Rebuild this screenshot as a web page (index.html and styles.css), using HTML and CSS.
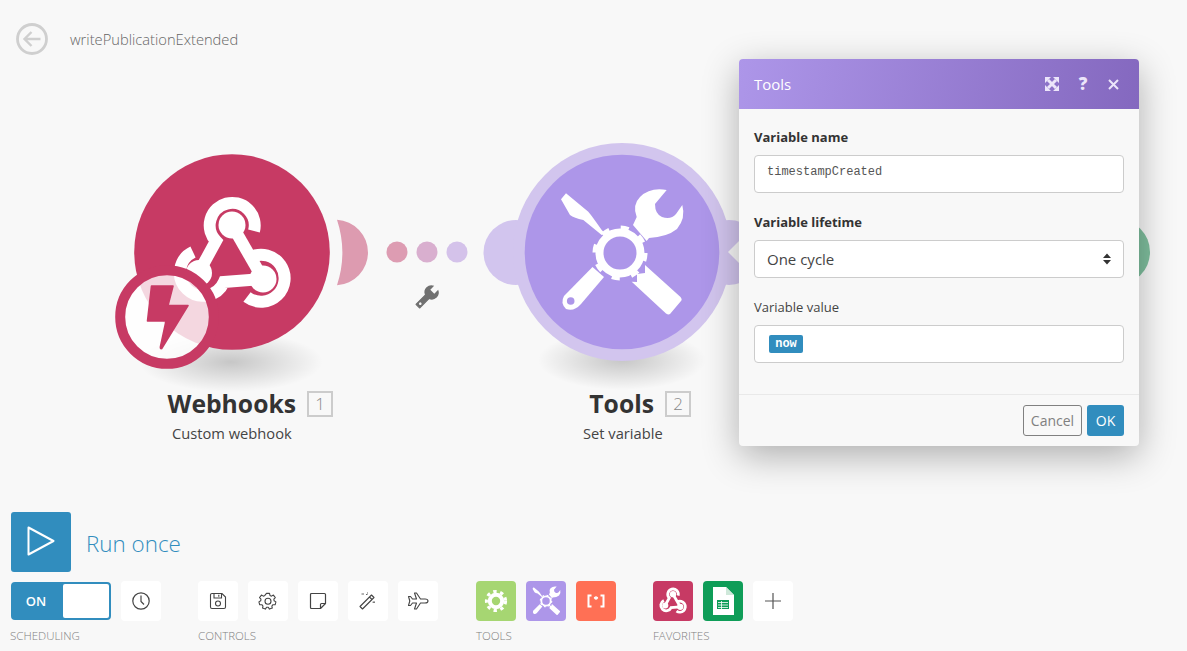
FILE: index.html
```html
<!DOCTYPE html>
<html lang="en">
<head>
<meta charset="utf-8">
<title>writePublicationExtended</title>
<link rel="stylesheet" href="styles.css">
</head>
<body>
<svg class="defs" width="0" height="0" aria-hidden="true">
  <defs>
    <radialGradient id="shadow">
      <stop offset="0" stop-color="#000" stop-opacity=".2"/>
      <stop offset=".5" stop-color="#000" stop-opacity=".1"/>
      <stop offset="1" stop-color="#000" stop-opacity="0"/>
    </radialGradient>
    <symbol id="webhook" viewBox="168 190 128 128">
      <g fill="none" stroke="#fff" stroke-width="12">
        <path d="M254 231 A22.500 22.500 0 1 0 216 241 L199 272"/>
        <path d="M232 225 L263 279"/>
        <path d="M263 279 L224 282 A23 23 0 1 1 193 252"/>
        <path d="M247 297 A23.500 23.500 0 1 0 251 257"/>
      </g>
      <circle cx="232" cy="225" r="13.500" fill="#fff"/>
      <circle cx="263" cy="279" r="13.500" fill="#fff"/>
      <circle cx="199" cy="273" r="13" fill="#fff"/>
    </symbol>
    <symbol id="tools" viewBox="553 183 134 140">
      <g fill="#fff">
        <path d="M566 193.300 L588.300 211.700 Q592 216 601.700 230 L605 233.300 L601.700 235 L583.300 220 Q574 218 570 215 L561 199.300 Z"/>
        <path d="M592.500 267 L604 277 L581 304 Q574 312 566 309 Q560 303 564 296 Z"/>
        <path d="M645 265 L680.500 297 Q682.500 299.500 681 301 L670 314 Q668.500 315 666 313.500 L631.700 281.700 L637 282 L637 274 L645 273 Z"/>
        <path d="M666.700 190 L655 204 Q655 214 662 217 Q671 220 676 214 L682.300 205 Q686 218 677 229 Q667 237 649 238 L646.700 241 L633 225 L636.700 217 Q632 205 640 197 Q650 187 666.700 190 Z"/>
      </g>
      <circle cx="620" cy="253" r="20.500" fill="none" stroke="#fff" stroke-width="8"/>
      <circle cx="620" cy="253" r="25" fill="none" stroke="#fff" stroke-width="5" stroke-dasharray="8 11.630"/>
    </symbol>
    <symbol id="cog" viewBox="0 0 24 24">
      <circle cx="12" cy="12" r="6.200" fill="none" stroke="#fff" stroke-width="4"/>
      <circle cx="12" cy="12" r="9.600" fill="none" stroke="#fff" stroke-width="3" stroke-dasharray="3.400 3.630"/>
    </symbol>
  </defs>
</svg>

<header class="topbar">
  <a class="back" aria-label="Back">
    <svg viewBox="0 0 32 32" width="32" height="32"><circle cx="16" cy="16" r="14.500" fill="none" stroke="#cfcfcf" stroke-width="2.800"/><path d="M24.500 16H8.500M15.500 9 8.500 16l7 7" fill="none" stroke="#cfcfcf" stroke-width="2.400"/></svg>
  </a>
  <h1 class="scenario-name">writePublicationExtended</h1>
</header>

<svg class="diagram" width="1187" height="651" viewBox="0 0 1187 651" aria-hidden="true">
  <ellipse cx="231" cy="362" rx="92" ry="30" fill="url(#shadow)"/>
  <ellipse cx="622" cy="360" rx="84" ry="30" fill="url(#shadow)"/>

  <circle cx="1117" cy="252" r="33" fill="#7fbf9e"/>

  <path d="M337 219.700 A32.800 32.800 0 0 1 337 285.200 A105 105 0 0 0 337 219.700 Z" fill="#dd9bb0"/>
  <circle cx="397" cy="252" r="10.500" fill="#dd9cb2"/>
  <circle cx="427" cy="252" r="10.500" fill="#d9afcf"/>
  <circle cx="457" cy="252" r="10.500" fill="#d4c2ea"/>
  <g transform="translate(427 297) rotate(45)">
    <path d="M-2.600 -4 V13 H2.600 V-4 Z" fill="#707070" stroke="#707070" stroke-linejoin="round"/>
    <path d="M-2.800 -13 V-7.500 H2.800 V-13 A7 7 0 0 1 2.800 0 H-2.800 A7 7 0 0 1 -2.800 -13 Z" fill="#707070"/>
    <circle cx="0" cy="9.500" r="1.300" fill="#f8f8f8"/>
  </g>

  <circle cx="232" cy="252" r="97.800" fill="#c73a64"/>
  <use href="#webhook" x="168" y="190" width="128" height="128"/>
  <circle cx="167" cy="317" r="46.800" fill="#fff" fill-opacity=".8" stroke="#c73a64" stroke-width="10"/>
  <path d="M151.500 286 H173 L168 305.500 H188 L161.700 348.500 Q160 349 160.500 346.500 L166 321 H147.500 Z" fill="#c73a64" stroke="#c73a64" stroke-width="1.600" stroke-linejoin="round"/>

  <circle cx="516" cy="252.500" r="32.500" fill="#d2c5ee"/>
  <circle cx="729" cy="252.500" r="32.500" fill="#d2c5ee"/>
  <circle cx="622" cy="252" r="109" fill="#d2c5ee"/>
  <path d="M728 252 L745 235 V269 Z" fill="#f8f8f8"/>
  <circle cx="622" cy="252" r="97.300" fill="#ad96e9"/>
  <use href="#tools" x="553" y="183" width="134" height="140"/>
  <circle cx="570.700" cy="301" r="3.800" fill="#ad96e9"/>
</svg>

<div class="node-label node-label-webhooks">
  <div class="node-title"><strong>Webhooks</strong><span class="node-index">1</span></div>
  <div class="node-sub">Custom webhook</div>
</div>
<div class="node-label node-label-tools">
  <div class="node-title"><strong>Tools</strong><span class="node-index">2</span></div>
  <div class="node-sub">Set variable</div>
</div>

<section class="modal">
  <header class="modal-head">
    <span class="modal-title">Tools</span>
    <div class="modal-actions">
      <svg class="action-expand" width="14" height="14" viewBox="0 0 14 14" aria-hidden="true"><path d="M3 3 11 11M11 3 3 11" stroke="#ece5fa" stroke-width="3"/><path d="M0 0H6L0 6ZM14 0V6L8 0ZM0 14V8L6 14ZM14 14H8L14 8Z" fill="#ece5fa"/></svg>
      <span class="modal-help">?</span>
      <svg width="11" height="11" viewBox="0 0 11 11" aria-hidden="true"><path d="M1 1 10 10M10 1 1 10" stroke="#ece5fa" stroke-width="2"/></svg>
    </div>
  </header>
  <div class="modal-body">
    <label class="field-label field-first">Variable name</label>
    <input class="text-field mono" type="text" value="timestampCreated">
    <label class="field-label">Variable lifetime</label>
    <div class="select-wrap">
      <select class="text-field select"><option>One cycle</option></select>
      <svg class="select-arrows" width="8" height="12" viewBox="0 0 8 12" aria-hidden="true"><path d="M4 .5 8 5H0ZM4 11.500 0 7H8Z" fill="#333"/></svg>
    </div>
    <label class="field-label field-plain">Variable value</label>
    <div class="text-field tag-field"><span class="tag">now</span></div>
  </div>
  <footer class="modal-foot">
    <button class="btn btn-cancel">Cancel</button>
    <button class="btn btn-ok">OK</button>
  </footer>
</section>

<footer class="toolbar">
  <div class="run-row">
    <button class="run-btn" aria-label="Run once">
      <svg width="30" height="32" viewBox="0 0 30 32"><path d="M2.500 2.500 27.500 16 2.500 29.500Z" fill="none" stroke="#fff" stroke-width="2" stroke-linejoin="round"/></svg>
    </button>
    <span class="run-label">Run once</span>
  </div>
  <div class="tool-row">
    <div class="group group-sched">
      <div class="group-items">
        <div class="toggle"><span class="toggle-on">ON</span><span class="toggle-knob"></span></div>
        <button class="tool">
          <svg width="20" height="20" viewBox="0 0 20 20"><circle cx="10" cy="10" r="8.200" fill="none" stroke="#444" stroke-width="1.200"/><path d="M10 4.500V10.500L13 13.500" fill="none" stroke="#444" stroke-width="1.200"/></svg>
        </button>
      </div>
      <div class="group-label">SCHEDULING</div>
    </div>
    <div class="group">
      <div class="group-items">
        <button class="tool"><svg width="18" height="18" viewBox="0 0 18 18"><path d="M1.500 3a1.500 1.500 0 0 1 1.500-1.500H13L16.500 5V15a1.500 1.500 0 0 1-1.500 1.500H3A1.500 1.500 0 0 1 1.500 15ZM5 1.500V6H12.500V1.500M9.800 2.800V4.800" fill="none" stroke="#444" stroke-width="1.100"/><circle cx="9" cy="11.500" r="2.500" fill="none" stroke="#444" stroke-width="1.100"/></svg></button>
        <button class="tool"><svg width="20" height="20" viewBox="0 0 20 20"><path d="M8.300 1.500h3.400l.5 2.300 1.700.8 2.100-1.200 2.100 2.800-1.600 1.700.3 1.900 2 1.200-.9 3.200-2.400-.1-1.200 1.500.5 2.300-3.200 1.100-1.300-2-1.900 0-1.300 2-3.200-1.100.5-2.300-1.200-1.500-2.400.1-.9-3.200 2-1.200.3-1.900-1.600-1.700 2.100-2.800 2.100 1.200 1.700-.8Z" transform="translate(1 1) scale(.9)" fill="none" stroke="#444" stroke-width="1.200" stroke-linejoin="round"/><circle cx="10" cy="10.200" r="3" fill="none" stroke="#444" stroke-width="1.100"/></svg></button>
        <button class="tool"><svg width="18" height="18" viewBox="0 0 18 18"><path d="M11.500 16.500H2.500a1 1 0 0 1-1-1V2.500a1 1 0 0 1 1-1h13a1 1 0 0 1 1 1V11.500ZM11.500 16.500V12.500a1 1 0 0 1 1-1h4" fill="none" stroke="#444" stroke-width="1.200" stroke-linejoin="round"/></svg></button>
        <button class="tool"><svg width="20" height="20" viewBox="0 0 20 20"><path d="M2 15.500 13.500 4l2.500 2.500L4.500 18ZM11.500 6l2.500 2.500" fill="none" stroke="#444" stroke-width="1.100" stroke-linejoin="round"/><path d="M3.500 3H6M8 3.500H9.500M9.500 1.500V2.500M16 10.500V12M14.500 11.200H17" fill="none" stroke="#666" stroke-width="1"/></svg></button>
        <button class="tool"><svg width="22" height="20" viewBox="0 0 22 20"><path d="M21 10c0-1.200-1.400-2-3-2h-4.500L9.500 2H7.500l2 6H5.500L3.500 5.500H1.500L2.800 10 1.500 14.500h2L5.500 12h4l-2 6h2l4-6H18c1.600 0 3-.8 3-2Z" fill="none" stroke="#444" stroke-width="1.100" stroke-linejoin="round"/></svg></button>
      </div>
      <div class="group-label">CONTROLS</div>
    </div>
    <div class="group group-tools">
      <div class="group-items">
        <button class="tool tool-green"><svg width="24" height="24"><use href="#cog"/></svg></button>
        <button class="tool tool-purple"><svg width="32" height="32"><use href="#tools"/></svg></button>
        <button class="tool tool-orange"><svg width="20" height="14" viewBox="0 0 20 14"><path d="M5.500 1.500H2.500V12.500H5.500M14.500 1.500H17.500V12.500H14.500" fill="none" stroke="#fff" stroke-width="2"/><path d="M10 2V6M8 3.200 12 4.800M12 3.200 8 4.800" stroke="#fff" stroke-width="1.200"/></svg></button>
      </div>
      <div class="group-label">TOOLS</div>
    </div>
    <div class="group">
      <div class="group-items">
        <button class="tool tool-crimson"><svg width="30" height="30"><use href="#webhook"/></svg></button>
        <button class="tool tool-sheets"><svg width="22" height="28" viewBox="0 0 22 28"><path d="M1 0H14L22 8V28H1Z" fill="#fff"/><path d="M14 0 22 8H14Z" fill="#cfe8da"/><path d="M5 13H17V22H5Z" fill="#0f9d58"/><path d="M6 15.500H16M6 18H16M6 20.500H16M9.500 14V22" stroke="#fff" stroke-width=".8"/></svg></button>
        <button class="tool"><svg width="18" height="18" viewBox="0 0 18 18"><path d="M9 1V17M1 9H17" stroke="#555" stroke-width="1.200"/></svg></button>
      </div>
      <div class="group-label">FAVORITES</div>
    </div>
  </div>
</footer>
</body>
</html>
```

FILE: styles.css
```css
* { box-sizing: border-box; }

html, body {
  margin: 0;
  height: 651px;
  overflow: hidden;
}

body {
  position: relative;
  background: #f8f8f8;
  font-family: "Open Sans", "Noto Sans", sans-serif;
  color: #333;
  display: flex;
  flex-direction: column;
}

.defs { position: absolute; }

.topbar {
  display: flex;
  align-items: center;
  height: 78px;
  padding-left: 16px;
}

.back { display: block; width: 32px; height: 32px; margin-right: 22px; }
.back svg { display: block; }

.scenario-name {
  margin: 0;
  font-size: 14.700px;
  font-weight: 300;
  color: #666;
}

.diagram { position: absolute; left: 0; top: 0; }

.node-label {
  position: absolute;
  top: 388px;
  text-align: center;
}

.node-label-webhooks { left: 132px; width: 201px; }
.node-label-tools { left: 522px; width: 169px; }

.node-title {
  display: flex;
  justify-content: flex-end;
  align-items: center;
  gap: 11px;
  height: 31px;
  line-height: 31px;
}

.node-title strong {
  font-size: 24.700px;
  font-weight: 700;
  color: #333;
}

.node-index {
  width: 26px;
  height: 26px;
  border: 2px solid #ccc;
  font-size: 17px;
  font-weight: 300;
  line-height: 22px;
  color: #888;
}

.node-sub {
  margin-top: 4px;
  font-size: 14.700px;
  line-height: 20px;
  color: #444;
  text-align: left;
}

.node-label-webhooks .node-sub { padding-left: 40px; }
.node-label-tools .node-sub { padding-left: 61px; }

.modal {
  position: absolute;
  left: 739px;
  top: 59px;
  width: 400px;
  height: 387px;
  display: flex;
  flex-direction: column;
  background: #f8f8f8;
  border-radius: 4px;
  box-shadow: 0 10px 36px rgba(0, 0, 0, .3);
}

.modal-head {
  display: flex;
  align-items: center;
  justify-content: space-between;
  height: 50px;
  padding: 0 20px 0 15px;
  border-radius: 4px 4px 0 0;
  background: linear-gradient(100deg, #ad96e9, #8468bf);
}

.modal-title { font-size: 15px; color: #fff; }

.modal-actions { display: flex; align-items: center; gap: 19px; }

.action-expand { margin-right: -1px; }

.modal-help {
  width: 12px;
  font-size: 17px;
  font-weight: 800;
  line-height: 20px;
  text-align: center;
  color: #ece5fa;
}

.modal-body { flex: 1; padding: 19px 15px 0; }

.field-label {
  display: block;
  height: 18px;
  margin: 20px 0 9px;
  font-size: 13px;
  line-height: 18px;
  font-weight: 700;
  color: #333;
}

.field-first { margin-top: 0; }
.field-plain { margin-top: 20px; font-weight: 400; color: #444; }

.text-field {
  display: block;
  width: 100%;
  height: 38px;
  padding: 0 13px;
  background: #fff;
  border: 1px solid #ccc;
  border-radius: 4px;
  font-family: inherit;
  outline: none;
}

.mono {
  padding: 0 12px 5px;
  font-family: "Liberation Mono", monospace;
  font-size: 12px;
  color: #555;
}

.select-wrap { position: relative; }

.select {
  appearance: none;
  -webkit-appearance: none;
  padding-left: 12px;
  font-size: 15px;
  color: #444;
}

.select-arrows { position: absolute; right: 13px; top: 13px; }

.tag-field { padding: 9px 14px; }

.tag {
  display: block;
  width: 34px;
  height: 18px;
  border-radius: 2px;
  background: #318dbe;
  font-family: "Liberation Mono", monospace;
  font-size: 12px;
  font-weight: 700;
  line-height: 19px;
  text-align: center;
  color: #fff;
}

.modal-foot {
  display: flex;
  justify-content: flex-end;
  gap: 5px;
  height: 52px;
  padding: 10px 15px 0;
  border-top: 1px solid #e9e9e9;
}

.btn {
  height: 31px;
  padding: 0;
  border-radius: 3px;
  font-family: inherit;
  font-size: 14px;
}

.btn-cancel {
  width: 59px;
  background: transparent;
  border: 1px solid #808080;
  color: #808080;
}

.btn-ok {
  width: 37px;
  background: #318dbe;
  border: 0;
  color: #fff;
}

.toolbar {
  position: absolute;
  left: 11px;
  top: 512px;
}

.run-row { display: flex; align-items: center; gap: 15px; }

.run-btn {
  display: flex;
  align-items: center;
  justify-content: center;
  width: 60px;
  height: 60px;
  padding: 0 0 2px;
  background: #318dbe;
  border: 0;
  border-radius: 3px;
}

.run-btn svg { display: block; }

.run-label {
  padding-top: 3px;
  font-size: 22.400px;
  font-weight: 300;
  color: #318dbe;
}

.tool-row { display: flex; gap: 37px; margin-top: 9px; }

.group-tools { margin-left: 1px; }

.group-items { display: flex; gap: 10px; }

.group-label {
  margin: 7px 0 0;
  height: 16px;
  font-size: 11.500px;
  font-weight: 300;
  line-height: 16px;
  color: #808080;
}

.group-sched .group-label { margin-left: -1px; }

.toggle {
  display: flex;
  width: 100px;
  height: 38px;
  margin-top: 1px;
  background: #318dbe;
  border: 2px solid #318dbe;
  border-radius: 4px;
}

.toggle-on {
  width: 50px;
  padding-right: 4px;
  font-size: 13px;
  font-weight: 600;
  line-height: 34px;
  text-align: center;
  color: #fff;
}

.toggle-knob {
  flex: 1;
  background: #fff;
  border-radius: 2px;
}

.tool {
  display: flex;
  align-items: center;
  justify-content: center;
  width: 40px;
  height: 40px;
  padding: 0;
  background: #fff;
  border: 0;
  border-radius: 4px;
}

.tool svg { display: block; }

.tool-green { background: #a6d672; }
.tool-purple { background: #ad96e9; }
.tool-orange { background: #ff7055; }
.tool-crimson { background: #c73a64; }
.tool-sheets { background: #0f9d58; }
```
